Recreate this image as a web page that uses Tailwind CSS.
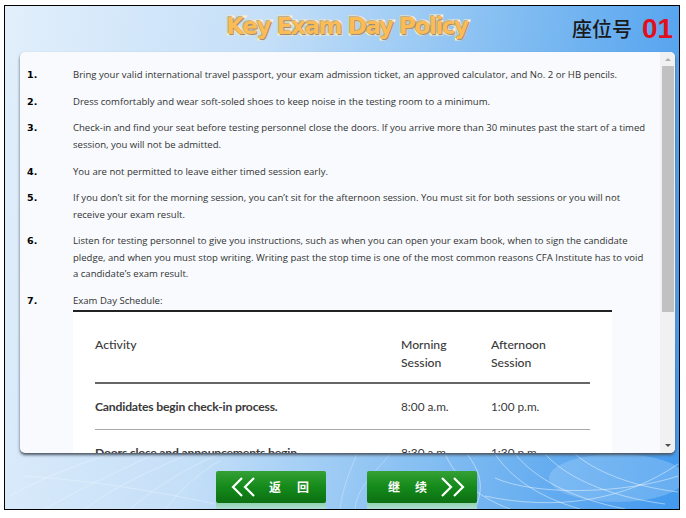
<!DOCTYPE html>
<html lang="en">
  <head>
    <meta charset="UTF-8" />
    <title>Key Exam Day Policy</title>
    <script src="https://cdn.jsdelivr.net/npm/@tailwindcss/browser@4"></script>
  </head>
  <body class="bg-white w-[686px] h-[518px] overflow-hidden font-['Open_Sans','Noto_Sans_CJK_SC',sans-serif]">
    <div class="pt-[5px] pl-[4px]">
      <div class="relative w-[676px] h-[505px] border border-black overflow-hidden bg-[linear-gradient(100deg,#e2effb_0%,#c4dff8_35%,#86bff2_65%,#4299ee_100%)]">
        <!-- background swirl -->
        <svg class="absolute inset-0" width="676" height="505" viewBox="0 0 676 505" fill="none">
          <ellipse cx="612" cy="472" rx="68" ry="24" fill="#a9d3f8" opacity="0.35" />
          <g stroke="#ffffff" stroke-opacity="0.28" stroke-width="1">
            <path d="M5 490 C40 470 70 460 105 448" />
            <path d="M40 503 C80 480 120 462 150 448" />
            <path d="M80 503 C110 480 150 462 185 448" />
            <path d="M125 503 C150 482 180 462 215 448" />
            <path d="M160 503 C175 485 195 465 215 455" />
            <path d="M20 470 C90 475 150 485 210 498" />
            <path d="M335 503 C338 480 345 465 352 448" />
            <path d="M350 503 C352 480 372 465 385 448" />
          </g>
          <g stroke="#ffffff" stroke-opacity="0.45" stroke-width="1">
            <path d="M470 503 C480 480 475 465 462 448" />
            <path d="M490 448 C505 470 530 490 575 503" />
            <path d="M510 448 C530 472 565 492 620 503" />
            <path d="M540 448 C560 470 600 490 660 498" />
            <path d="M570 448 C590 465 625 480 673 486" />
            <path d="M440 448 C450 470 470 490 505 503" />
            <path d="M480 490 C550 505 620 495 673 458" />
            <path d="M490 472 C530 490 620 488 673 470" />
            <path d="M668 60 C671 200 671 330 668 448" stroke-opacity="0.35" />
          </g>
        </svg>

        <div class="relative flex flex-col h-full">
          <header class="h-[46px] flex items-center">
            <h1 class="mb-[5px] ml-[220px] w-[244px] whitespace-nowrap text-center font-['DejaVu_Sans',sans-serif] font-bold text-[23px] tracking-[-1.4px] text-[#fcbc55] [-webkit-text-stroke:3px_#fff0cf] [paint-order:stroke_fill] [text-shadow:1px_1px_1px_#8d8470,-1px_-1px_1px_#b5aa90]">Key Exam Day Policy</h1>
            <span class="ml-[103px] text-[20px] font-medium text-[#1a1a1a] whitespace-nowrap font-['Noto_Sans_CJK_SC',sans-serif]">座位号</span>
            <span class="ml-[10px] text-[28px] font-bold text-[#e0101c] font-['Liberation_Sans',sans-serif]">01</span>
          </header>

          <main class="ml-[15px] w-[655px] h-[401px] flex rounded-[5px] bg-[#f8fafd] overflow-hidden shadow-[0_2px_3px_#4b5563]">
            <div class="w-[640px] h-full overflow-hidden pt-[15px] pl-[7px] text-[9.55px] leading-[16.5px] text-[#333]">
              <ol class="flex flex-col gap-[10.2px]">
                <li class="flex">
                  <b class="w-[46px] shrink-0 font-['DejaVu_Sans',sans-serif] text-black">1.</b>
                  <p class="w-[575px]">Bring your valid international travel passport, your exam admission ticket, an approved calculator, and No. 2 or HB pencils.</p>
                </li>
                <li class="flex">
                  <b class="w-[46px] shrink-0 font-['DejaVu_Sans',sans-serif] text-black">2.</b>
                  <p class="w-[575px]">Dress comfortably and wear soft-soled shoes to keep noise in the testing room to a minimum.</p>
                </li>
                <li class="flex">
                  <b class="w-[46px] shrink-0 font-['DejaVu_Sans',sans-serif] text-black">3.</b>
                  <p class="w-[575px]">Check-in and find your seat before testing personnel close the doors. If you arrive more than 30 minutes past the start of a timed session, you will not be admitted.</p>
                </li>
                <li class="flex">
                  <b class="w-[46px] shrink-0 font-['DejaVu_Sans',sans-serif] text-black">4.</b>
                  <p class="w-[575px]">You are not permitted to leave either timed session early.</p>
                </li>
                <li class="flex">
                  <b class="w-[46px] shrink-0 font-['DejaVu_Sans',sans-serif] text-black">5.</b>
                  <p class="w-[575px]">If you don’t sit for the morning session, you can’t sit for the afternoon session. You must sit for both sessions or you will not receive your exam result.</p>
                </li>
                <li class="flex">
                  <b class="w-[46px] shrink-0 font-['DejaVu_Sans',sans-serif] text-black">6.</b>
                  <p class="w-[575px]">Listen for testing personnel to give you instructions, such as when you can open your exam book, when to sign the candidate pledge, and when you must stop writing. Writing past the stop time is one of the most common reasons CFA Institute has to void a candidate’s exam result.</p>
                </li>
                <li class="flex">
                  <b class="w-[46px] shrink-0 font-['DejaVu_Sans',sans-serif] text-black">7.</b>
                  <div class="w-[539px]">
                    <p class="h-[17px]">Exam Day Schedule:</p>
                    <div class="bg-white border-t-2 border-[#222] pt-[24px] pl-[22px] font-['Lato',sans-serif] text-[12.2px] leading-[18px] text-[#3a3a3a]">
                      <div class="w-[495px] h-[48px] flex border-b-2 border-[#666] font-medium">
                        <span class="w-[306px]">Activity</span>
                        <span class="w-[90px]">Morning<br />Session</span>
                        <span>Afternoon<br />Session</span>
                      </div>
                      <div class="w-[495px] h-[46px] flex items-center border-b border-[#aaa]">
                        <b class="w-[306px] font-bold tracking-[-0.2px]">Candidates begin check-in process.</b>
                        <span class="w-[90px] text-[11.8px]">8:00 a.m.</span>
                        <span class="text-[11.8px]">1:00 p.m.</span>
                      </div>
                      <div class="w-[495px] h-[46px] flex items-center">
                        <b class="w-[306px] font-bold tracking-[-0.2px]">Doors close and announcements begin.</b>
                        <span class="w-[90px] text-[11.8px]">8:30 a.m.</span>
                        <span class="text-[11.8px]">1:30 p.m.</span>
                      </div>
                    </div>
                  </div>
                </li>
              </ol>
            </div>
            <!-- scrollbar -->
            <div class="w-[15px] h-full flex flex-col items-center bg-[#f1f1f1]">
              <div class="h-[14px] flex items-center justify-center">
                <div class="w-0 h-0 border-x-[3px] border-x-transparent border-b-[3px] border-b-[#b0b0b0]"></div>
              </div>
              <div class="w-[12px] h-[246px] bg-[#c1c1c1]"></div>
              <div class="flex-1 flex items-end pb-[6px]">
                <div class="w-0 h-0 border-x-[3px] border-x-transparent border-t-[3px] border-t-[#505050]"></div>
              </div>
            </div>
          </main>

          <footer class="flex-1 flex pl-[211px] gap-[41px] pt-[18px]">
            <button class="w-[110px] h-[38px] flex flex-col">
              <span class="h-[32px] w-full flex items-center pl-[15px] rounded-[2px] bg-[linear-gradient(#35a035,#148a1a_50%,#0c6f12)] text-white text-[12px] font-bold font-['Noto_Sans_CJK_SC',sans-serif]">
                <svg width="25" height="20" viewBox="0 0 25 20" fill="none" stroke="#fff" stroke-width="2.2">
                  <path d="M11 1 L2 10 L11 19" />
                  <path d="M23 1 L14 10 L23 19" />
                </svg>
                <span class="ml-[13px]">返</span>
                <span class="ml-[16px]">回</span>
              </span>
              <span class="h-[6px] w-full bg-[linear-gradient(#8fd4b0,#b0dcd8)]"></span>
            </button>
            <button class="w-[110px] h-[38px] flex flex-col">
              <span class="h-[32px] w-full flex items-center pl-[21px] rounded-[2px] bg-[linear-gradient(#35a035,#148a1a_50%,#0c6f12)] text-white text-[12px] font-bold font-['Noto_Sans_CJK_SC',sans-serif]">
                <span>继</span>
                <span class="ml-[15px]">续</span>
                <svg class="ml-[13px]" width="25" height="20" viewBox="0 0 25 20" fill="none" stroke="#fff" stroke-width="2.2">
                  <path d="M2 1 L11 10 L2 19" />
                  <path d="M14 1 L23 10 L14 19" />
                </svg>
              </span>
              <span class="h-[6px] w-full bg-[linear-gradient(#8fd4b0,#b0dcd8)]"></span>
            </button>
          </footer>
        </div>
      </div>
    </div>
  </body>
</html>
